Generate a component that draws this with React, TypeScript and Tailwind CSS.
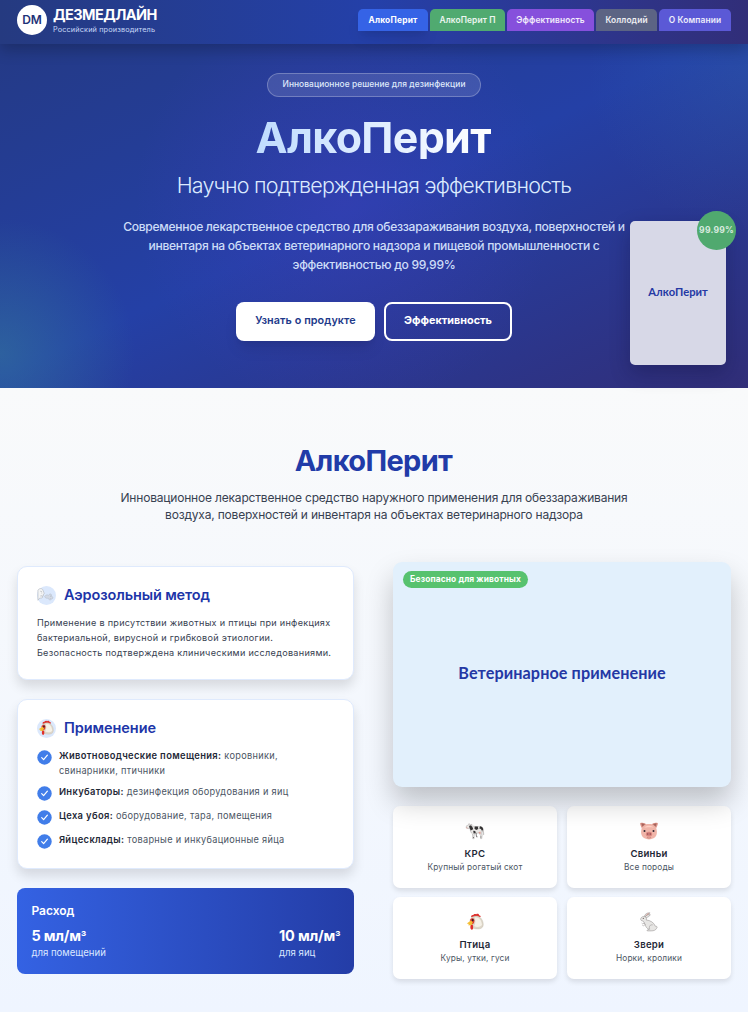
import React from "react";

const tabs = [
  { label: "АлкоПерит", style: "w-[70px] bg-[#3563e6] shadow-lg font-bold tracking-[.22px]" },
  { label: "АлкоПерит П", style: "w-[75px] bg-[#50aa70] text-white/90 font-semibold tracking-[.12px]" },
  { label: "Эффективность", style: "w-[87px] bg-[#8650dc] text-white/90 font-semibold tracking-[.12px]" },
  { label: "Коллодий", style: "w-[61px] bg-[#5c6484] text-white/90 font-semibold tracking-[.1px]" },
  { label: "О Компании", style: "w-[72px] bg-[#5b59d6] text-white/90 font-semibold tracking-[.12px]" },
];

const uses = [
  { title: "Животноводческие помещения:", lines: ["коровники,", "свинарники, птичники"], style: "h-[36px]" },
  { title: "Инкубаторы:", lines: ["дезинфекция оборудования и яиц"], style: "h-[24px]" },
  { title: "Цеха убоя:", lines: ["оборудование, тара, помещения"], style: "h-[24px]" },
  { title: "Яйцесклады:", lines: ["товарные и инкубационные яйца"], style: "h-[24px]" },
];

function Wind() {
  return (
    <svg viewBox="0 0 20 20" className="h-[19px] w-[19px]">
      <path d="M1 4.2C3 2 6 2.3 6.5 5l1.2 3-1 .6.2 1.6-1.2.5.1 1.4c-1 1-2.4.2-3.4 1L1 15z" fill="#f4f5f6" stroke="#b5bac1" strokeWidth=".7" />
      <path d="M3.5 5.5l1.6.4M4.6 7.4h.8M3.5 10.5l2.2-.2" stroke="#989da5" strokeWidth=".6" />
      <path d="M8 11c2-2 3-2 4-1 .8-2 3-2.2 3.3-.6.2 1.4-.9 1.7-1.6 1.2 1.6 0 3 .4 3 1.8s-2 1.8-2.7.7c1.2 1.2.2 2.2-.9 1.5-1-.7-.4-1.8-1.6-1.7-1.7.2-2.8-.3-3.5-1.9z" fill="#d3d9e4" stroke="#b4bdca" strokeWidth=".6" />
    </svg>
  );
}

function Chicken({ className }: { className: string }) {
  return (
    <svg viewBox="0 0 18 18" className={className}>
      <path d="M5.2 4.2C4.9 2.6 6 1.7 7.2 2 7.7.9 9.2.5 10.2 1.3c1.2-.9 2.7-.3 2.9.9 1 0 1.7.7 1.5 1.8L12 4.5 8 4.4z" fill="#df2f2b" />
      <path d="M3.9 7.2C4.8 4.2 8 2.7 11 3.1c3.4.5 6.4 4.1 6.3 8.7-.1 3.3-3.1 4.4-6 4.2-3-.2-6-.8-6.2-3.6z" fill="#ddd6c8" stroke="#b9b0a2" strokeWidth=".3" />
      <path d="M8.5 4.3c4.6-.8 7.3 3.3 7.5 7.8-1.8 2.3-5.9 2.2-7.9.9 1.4-2.2 1.9-5.4.4-8.7z" fill="#f5f1e7" />
      <path d="M4 7.1C5.1 4.8 8 4.5 8.4 7.2c.3 2.4-1 4-3 4.6z" fill="#dc3a2d" />
      <path d="M4.9 7.6.8 10.5l2.1.6-.8 1.1 3.5.1 1.2-3z" fill="#f4bd33" />
      <path d="M4.8 12c-.8 2-.6 4.3.8 4.7 1.5.1 1.9-1.7 1.2-4.7z" fill="#df2f2b" />
      <ellipse cx="6.7" cy="7.2" rx=".9" ry="1.1" fill="#28202b" />
    </svg>
  );
}

function Cow() {
  return (
    <svg viewBox="0 0 20 18" className="h-[18px] w-5">
      <path d="M1.6 3.7 3.5 3l.4-1.5 1.3 1.1L7 2.4l-.5 1.3c2.4.8 4.8 1 8.2.7 2.2 0 3.5 1.2 3.6 3.2l.5 5h-.6l-.6-4-1.2 2.2.8 2.3-.4 3.5h-1.3l.1-3-1.7-2.7-3.2.5-1.5 1.1-.1 4.2H7.7l-.2-4.7c-1.8-1.2-2.3-3-2.2-5.3L2.6 6.5 1 5.5z" fill="#e9e7e5" stroke="#777474" strokeWidth=".3" />
      <path d="M5 3.2c1.8.5 3 2 3.2 4.1L5.7 8.5 4 4.4zM9.8 4.4l3 .2.5 2.5-2.2.8-1.7-1.4zM15 4.2c2.5.3 3.1 1.5 3.2 4l-1.6.4-.6-1.7-1.7-.5zM8.2 8.7l2 .2.6 1.8-2.1 1.1z" fill="#343334" />
      <path d="m1 5.2 1.1.1.8 1.2-1.4-.1z" fill="#dba6a1" />
      <path d="m13.4 10.2 2-.7.5 1.9-1.2.5z" fill="#dc9f95" />
      <path d="M8 15.5h1M15.4 15h1M11 10.8l.5 4h1" stroke="#4d494a" strokeWidth=".7" fill="none" />
    </svg>
  );
}

function Pig() {
  return (
    <svg viewBox="0 0 20 18" className="h-[18px] w-5">
      <path d="M1.2.9C4 .2 6.5.9 7.5 2.6L3.2 7.4C3 4.8.7 3.2 1.2.9zM18.8.9C16 .2 13.5.9 12.5 2.6l4.3 4.8c.2-2.6 2.5-4.2 2-6.5z" fill="#dd9489" />
      <path d="M2.3 1.6c2-.1 3.3.5 4 1.8L4 5.8zM17.7 1.6c-2-.1-3.3.5-4 1.8L16 5.8z" fill="#a7645d" />
      <path d="M3.1 5.2C5.2 2.5 7.5 2 10 2c2.5 0 4.8.5 6.9 3.2 2.6 7.1.3 11.8-6.9 12.2-7.2-.4-9.5-5.1-6.9-12.2z" fill="#f0b5a9" />
      <path d="M5.2 5.8c2.6-2.6 7-2.6 9.6 0-2.2-.8-7.4-.8-9.6 0z" fill="#ffd0c4" />
      <circle cx="5.5" cy="9" r="1" fill="#302733" /><circle cx="14.5" cy="9" r="1" fill="#302733" />
      <ellipse cx="10" cy="12.2" rx="3.1" ry="2.4" fill="#d9847e" />
      <ellipse cx="8.8" cy="12.1" rx=".6" ry="1" fill="#8a4a50" /><ellipse cx="11.2" cy="12.1" rx=".6" ry="1" fill="#8a4a50" />
      <path d="M7.9 15.6q2.1 1 4.2 0" fill="none" stroke="#a5534e" strokeWidth=".5" />
    </svg>
  );
}

function Rabbit() {
  return (
    <svg viewBox="0 0 20 20" className="h-5 w-5">
      <g fill="#e7e6e4" stroke="#8c8988" strokeWidth=".5" strokeLinejoin="round">
        <path d="M5.4 4.4C5.8 2 8 .8 10.8.7c-.2 1.6-2 2.7-4.2 4.1z" />
        <path d="M6 5.2c.6-1.8 3.2-3 5.3-2.5-.6 1.5-2.2 2.3-4.2 3.1z" />
        <path d="M1.7 6.7C2.3 4.9 4.2 4 6.1 4.7c1.5.7 1.7 2 1.1 3.3 3.9.2 7.9 2.6 9 6.1 1.9-.4 2.7 1.8 1.1 2.6-.6 1.4-2.4 2.2-5.2 2.2H8.3c-.7-.7.2-1.4 2-1.5-2.4-.8-3.8-2.6-4.3-5.2L4.2 9.1C2.2 8.8 1.4 8.1 1.7 6.7z" />
        <path d="m6 11-2.4.8-1-.8M6.5 12.4l-2.2 1.4-1-.6M10.8 17.2c-1.3-2.8.5-4.8 2.9-4.3" fill="none" />
      </g>
      <path d="M7 3.7c.5-1 1.6-1.9 2.8-2.2" fill="none" stroke="#c88379" strokeWidth=".8" />
      <circle cx="4.3" cy="6.3" r=".55" fill="#45302c" />
    </svg>
  );
}

const animals = [
  { icon: <Cow />, name: "КРС", text: "Крупный рогатый скот" },
  { icon: <Pig />, name: "Свиньи", text: "Все породы" },
  { icon: <Chicken className="h-[18px] w-[18px]" />, name: "Птица", text: "Куры, утки, гуси" },
  { icon: <Rabbit />, name: "Звери", text: "Норки, кролики" },
];

function Header() {
  return (
    <header className="relative z-10 flex h-11 items-start justify-between bg-linear-to-r from-[#253a80] via-[#2440a9] to-[#312e79] pr-[17px] pl-[17px] shadow-[0_6px_15px_rgba(0,0,0,.22)]">
      <div className="flex pt-[5px]">
        <div className="flex h-[30px] w-[30px] items-center justify-center rounded-full bg-white text-[12px] font-semibold text-[#1e3278]">DM</div>
        <div className="ml-[6px] pt-[2px]">
          <div className="text-[14.5px] leading-[16px] font-bold tracking-[-.57px] whitespace-nowrap text-white">ДЕЗМЕДЛАЙН</div>
          <div className="mt-[2px] text-[7.3px] leading-[9px] tracking-[.13px] whitespace-nowrap text-[#c9daf8]">Российский производитель</div>
        </div>
      </div>
      <nav className="flex gap-[2px] pt-[9px]">
        {tabs.map((tab) => (
          <a key={tab.label} className={"flex h-[22px] items-center justify-center rounded-t-[5px] text-[8.4px] whitespace-nowrap text-white " + tab.style}>{tab.label}</a>
        ))}
      </nav>
    </header>
  );
}

function Hero() {
  return (
    <section className="relative h-[344px] bg-[radial-gradient(circle_at_0%_90%,rgba(60,150,150,.38),transparent_135px),radial-gradient(circle_at_100%_8%,rgba(50,110,180,.26),transparent_160px),radial-gradient(circle_at_46%_46%,rgba(79,60,200,.3),transparent_210px),linear-gradient(155deg,#243a86_0%,#2440a6_48%,#312e78_100%)]">
      <div className="flex flex-col items-center pt-[28.5px] text-center">
        <div className="flex h-[24px] w-[214px] items-center justify-center rounded-full border border-white/25 bg-white/12 text-[8.4px] font-medium tracking-[.07px] whitespace-nowrap text-[#dfe9fb]">Инновационное решение для дезинфекции</div>
        <h1 className="mt-[18.5px] mr-px bg-linear-to-r from-[#bfdbfe] to-white bg-clip-text text-[43px] leading-[44px] font-bold tracking-[-.7px] text-transparent">АлкоПерит</h1>
        <p className="mt-[12.5px] text-[21.5px] leading-[26px] font-light tracking-[-.78px] whitespace-nowrap text-[#dbeafe]">Научно подтвержденная эффективность</p>
        <p className="mt-[19.5px] text-[12.1px] leading-[19.2px] font-medium tracking-[-.31px] text-[#cdddf8]">
          <span className="block whitespace-nowrap">Современное лекарственное средство для обеззараживания воздуха, поверхностей и</span>
          <span className="block whitespace-nowrap">инвентаря на объектах ветеринарного надзора и пищевой промышленности с</span>
          <span className="block">эффективностью до 99,99%</span>
        </p>
        <div className="mt-[27px] flex gap-[9px]">
          <button className="h-[39px] w-[139px] rounded-[8px] bg-white text-[10.8px] font-semibold tracking-[.08px] whitespace-nowrap text-[#1e3a8a] shadow-lg">Узнать о продукте</button>
          <button className="h-[39px] w-[128px] rounded-[8px] border-2 border-white text-[10.8px] font-bold whitespace-nowrap text-white">Эффективность</button>
        </div>
      </div>
      <div className="absolute top-[177px] left-[630px] flex h-[144px] w-[96px] items-center justify-center rounded-[5px] bg-[#d7d8e7] pb-[2px] font-['Lato','Noto_Sans',sans-serif] text-[11.2px] font-bold text-[#2438a4] shadow-[0_8px_20px_rgba(15,15,60,.32)]">
        <span>АлкоПерит</span>
        <div className="absolute -top-[10px] -right-[10px] flex h-[39px] w-[39px] items-center justify-center rounded-full bg-[#50a96f] font-['Inter',sans-serif] text-[8.6px] font-bold tracking-[.2px] text-[#d8eadf]">99.99%</div>
      </div>
    </section>
  );
}

function Methods() {
  return (
    <div className="w-[337px] pt-[4px]">
      <section className="h-[114px] rounded-[10px] border border-[#dfeafd] bg-white px-[18.5px] pt-[18px] shadow-[0_7px_12px_rgba(0,0,0,.12)]">
        <div className="flex h-5 items-center gap-[8px]">
          <div className="flex h-[19px] w-[19px] items-center justify-center rounded-full bg-[#dbe8fc]"><Wind /></div>
          <h3 className="text-[14.5px] font-semibold tracking-[-.13px] whitespace-nowrap text-[#1d35a8]">Аэрозольный метод</h3>
        </div>
        <p className="mt-[10px] text-[9.1px] leading-[15.2px] tracking-[.29px] whitespace-nowrap text-[#374151]">
          Применение в присутствии животных и птицы при инфекциях<br />бактериальной, вирусной и грибковой этиологии.<br />Безопасность подтверждена клиническими исследованиями.
        </p>
      </section>
      <section className="mt-[19px] h-[170px] rounded-[10px] border border-[#dfeafd] bg-white px-[18.5px] pt-[18px] shadow-[0_7px_12px_rgba(0,0,0,.12)]">
        <div className="flex h-5 items-center gap-[8px]">
          <div className="flex h-[19px] w-[19px] items-center justify-center rounded-full bg-[#dbe8fc]"><Chicken className="h-4 w-4" /></div>
          <h3 className="text-[14.5px] font-semibold tracking-[-.05px] text-[#1d35a8]">Применение</h3>
        </div>
        <ul className="mt-[11px]">
          {uses.map((use) => (
            <li key={use.title} className={"flex text-[9.2px] leading-[14.5px] tracking-[.3px] text-[#4b5563] " + use.style}>
              <svg viewBox="0 0 15 15" className="mt-[1px] mr-[7px] h-[15px] w-[15px] shrink-0"><circle cx="7.5" cy="7.5" r="7.2" fill="#417de9" /><path d="m4.7 7.7 1.9 1.9 3.8-4.5" fill="none" stroke="white" strokeWidth="1.2" strokeLinecap="round" strokeLinejoin="round" /></svg>
              <div className="whitespace-nowrap">
                <p className="flex gap-[3px]"><strong className="text-[9.4px] font-semibold tracking-[.34px] text-[#1f2937]">{use.title}</strong><span>{use.lines[0]}</span></p>
                {use.lines[1] && <p>{use.lines[1]}</p>}
              </div>
            </li>
          ))}
        </ul>
      </section>
      <section className="mt-[19px] h-[86px] rounded-[8px] bg-linear-to-r from-[#3462e3] to-[#243da7] px-[14px] pt-[15px] text-white">
        <h3 className="text-[12px] leading-[16px] font-semibold">Расход</h3>
        <div className="mt-[7px] flex justify-between whitespace-nowrap">
          <div><p className="text-[14.5px] leading-[19px] font-bold tracking-[-.2px]">5 мл/м<span className="text-[12px] leading-none tracking-[-.3px]">³</span></p><p className="text-[9.6px] leading-[15px] text-[#dbe7ff]">для помещений</p></div>
          <div><p className="text-[14.5px] leading-[19px] font-bold tracking-[-.2px]">10 мл/м<span className="text-[12px] leading-none tracking-[-.3px]">³</span></p><p className="text-[9.6px] leading-[15px] text-[#dbe7ff]">для яиц</p></div>
        </div>
      </section>
    </div>
  );
}

function Animals() {
  return (
    <div className="w-[338px]">
      <div className="relative flex h-[225px] items-center justify-center rounded-[9px] bg-[#e2f0fc] pb-[2px] font-['Lato','Noto_Sans',sans-serif] text-[16.2px] font-bold tracking-[.09px] text-[#2438a4] shadow-[0_15px_28px_rgba(0,0,0,.22)]">
        <span className="whitespace-nowrap">Ветеринарное применение</span>
        <span className="absolute top-[9px] left-[10px] flex h-[17px] w-[125px] items-center justify-center rounded-full bg-[#57c26e] font-['Inter',sans-serif] text-[8.4px] font-bold tracking-[.12px] whitespace-nowrap text-white">Безопасно для животных</span>
      </div>
      <div className="mt-[19px] grid grid-cols-2 gap-x-[10px] gap-y-[9px]">
        {animals.map((animal) => (
          <section key={animal.name} className="flex h-[82px] flex-col items-center rounded-[7px] bg-white pt-[15px] shadow-[0_3px_5px_rgba(0,0,0,.1)]">
            <div className="flex h-5 items-center justify-center">{animal.icon}</div>
            <h4 className="mt-[6px] text-[9.6px] leading-[14px] font-semibold tracking-[.25px] text-[#1f2937]">{animal.name}</h4>
            <p className="text-[8.3px] leading-[12px] tracking-[.15px] whitespace-nowrap text-[#4b5563]">{animal.text}</p>
          </section>
        ))}
      </div>
    </div>
  );
}

export default function App() {
  return (
    <div className="h-[1012px] w-[748px] overflow-hidden font-['Inter','Noto_Sans',sans-serif]">
      <Header />
      <Hero />
      <main className="h-[624px] bg-linear-to-b from-[#f9fafb] to-[#eff5ff] pt-[56px]">
        <h2 className="mr-px text-center text-[29px] leading-[34px] font-bold tracking-[-.65px] text-[#213ba8]">АлкоПерит</h2>
        <p className="mt-[11px] text-center text-[12px] leading-[17.2px] tracking-[-.19px] whitespace-nowrap text-[#374151]">
          Инновационное лекарственное средство наружного применения для обеззараживания<br />воздуха, поверхностей и инвентаря на объектах ветеринарного надзора
        </p>
        <div className="mt-[38.6px] flex justify-between pr-[17px] pl-[17.4px]">
          <Methods />
          <Animals />
        </div>
      </main>
    </div>
  );
}
